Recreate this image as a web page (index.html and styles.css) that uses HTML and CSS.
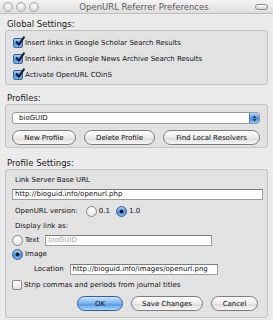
FILE: index.html
```html
<!DOCTYPE html>
<html lang="en">
<head>
  <meta charset="UTF-8" />
  <title>OpenURL Referrer Preferences</title>
  <link rel="stylesheet" href="styles.css">
</head>
<body>
  <div class="window">
    <div class="titlebar">
      <div class="lights">
        <span class="light"></span><span class="light"></span><span class="light"></span>
      </div>
      <div class="title">OpenURL Referrer Preferences</div>
      <span class="pill"></span>
    </div>

    <div class="label">Global Settings:</div>
    <div class="group global">
      <div class="row"><span class="check on"><svg viewBox="0 0 10 10"><path d="M2 5 L4.3 7.8 L9.5 0.5" /></svg></span>Insert links in Google Scholar Search Results</div>
      <div class="row"><span class="check on"><svg viewBox="0 0 10 10"><path d="M2 5 L4.3 7.8 L9.5 0.5" /></svg></span>Insert links in Google News Archive Search Results</div>
      <div class="row"><span class="check on"><svg viewBox="0 0 10 10"><path d="M2 5 L4.3 7.8 L9.5 0.5" /></svg></span>Activate OpenURL COinS</div>
    </div>

    <div class="label">Profiles:</div>
    <div class="group profiles">
      <div class="select">
        <span class="select-text">bioGUID</span>
        <span class="select-cap"><svg viewBox="0 0 6 10"><path d="M1 4 L3 1.5 L5 4 Z M1 6 L3 8.5 L5 6 Z" /></svg></span>
      </div>
      <div class="btn-row">
        <span class="btn w-new">New Profile</span>
        <span class="btn w-del">Delete Profile</span>
        <span class="btn w-find">Find Local Resolvers</span>
      </div>
    </div>

    <div class="label">Profile Settings:</div>
    <div class="group settings">
      <div class="field-label">Link Server Base URL</div>
      <div class="input wide">http://bioguid.info/openurl.php</div>
      <div class="row version">
        <span class="field-label">OpenURL version:</span>
        <span class="radio"></span><span class="opt">0.1</span>
        <span class="radio on"></span><span class="opt">1.0</span>
      </div>
      <div class="field-label">Display link as:</div>
      <div class="row">
        <span class="radio"></span><span class="opt">Text</span>
        <span class="input text-input dim">bioGUID</span>
      </div>
      <div class="row">
        <span class="radio on"></span><span class="opt">Image</span>
      </div>
      <div class="row location">
        <span class="loc-label">Location</span>
        <span class="input loc-input">http://bioguid.info/images/openurl.png</span>
      </div>
      <div class="row strip"><span class="check"></span>Strip commas and periods from journal titles</div>
      <div class="btn-row actions">
        <span class="btn default w-ok">OK</span>
        <span class="btn w-save">Save Changes</span>
        <span class="btn w-cancel">Cancel</span>
      </div>
    </div>
  </div>
</body>
</html>
```

FILE: styles.css
```css
* { margin: 0; padding: 0; box-sizing: border-box; }

html, body {
  width: 273px;
  height: 320px;
  overflow: hidden;
}

body {
  font-family: "DejaVu Sans", sans-serif;
  font-size: 7px;
  color: #111;
  background: #ececec;
  background-image: repeating-linear-gradient(180deg, #eeeeee 0, #eeeeee 1px, #e8e8e8 1px, #e8e8e8 2px);
}

.window { height: 320px; }

.titlebar {
  height: 14px;
  display: flex;
  align-items: center;
  padding: 0 5px 0 3px;
  background: linear-gradient(#f4f4f4, #dedede);
  border-bottom: 1px solid #bcbcbc;
}
.lights { display: flex; gap: 3px; }
.light {
  width: 10px;
  height: 10px;
  border-radius: 50%;
  border: 1px solid #a9a9a9;
  background: radial-gradient(circle at 50% 35%, #fafafa, #cfcfcf);
}
.title {
  flex: 1;
  text-align: center;
  font-size: 8.5px;
  color: #5a5a5a;
  padding-right: 6px;
}
.pill {
  width: 13px;
  height: 6px;
  border-radius: 3px;
  border: 1px solid #8c8c8c;
  background: linear-gradient(#fdfdfd, #d4d4d4);
}

.label {
  font-size: 8.5px;
  padding: 0 0 0 7px;
  line-height: 10px;
  color: #202020;
}
.titlebar + .label { margin-top: 5px; }

.group {
  margin: 1px 5px 0 5px;
  border: 1px solid #c2c2c2;
  border-radius: 3px;
  background: rgba(210, 210, 210, 0.35);
}

.global { padding: 4px 0 3px 7px; height: 55px; margin-bottom: 8px; }
.global .row { height: 16px; }

.row {
  display: flex;
  align-items: center;
  white-space: nowrap;
}

.check {
  width: 10px;
  height: 10px;
  margin-right: 2px;
  border: 1px solid #8a8a8a;
  border-radius: 2px;
  background: linear-gradient(#ffffff, #e2e2e2);
  flex: none;
  position: relative;
}
.check.on {
  border-color: #3a5f9a;
  background: linear-gradient(#a9cdf3, #4f8fdc 55%, #7fb6ee);
}
.check svg {
  position: absolute;
  left: 0;
  top: -3px;
  width: 11px;
  height: 11px;
}
.check path { fill: none; stroke: #0d1a30; stroke-width: 1.8; }

.profiles { height: 44px; padding: 7px 7px 0 6px; margin-bottom: 10px; }

.select {
  height: 12px;
  display: flex;
  border: 1px solid #9b9b9b;
  border-radius: 3px;
  background: #fff;
  overflow: hidden;
}
.select-text { flex: 1; padding-left: 6px; line-height: 10px; }
.select-cap {
  width: 10px;
  background: linear-gradient(#b4d6f7, #4c8ed9 55%, #8cc0f1);
  border-left: 1px solid #5b82b8;
  display: flex;
  align-items: center;
  justify-content: center;
}
.select-cap svg { width: 5px; height: 9px; }
.select-cap path { fill: #122038; }

.btn-row { display: flex; gap: 8px; margin-top: 6px; }
.btn {
  height: 15px;
  border: 1px solid #7d7d7d;
  border-radius: 8px;
  background: linear-gradient(#ffffff, #ececec 50%, #dadada 51%, #f6f6f6);
  display: flex;
  align-items: center;
  justify-content: center;
  white-space: nowrap;
}
.w-new { width: 64px; }
.w-del { width: 71px; }
.w-find { width: 97px; }

.settings { height: 149px; padding: 5px 0 0 6px; }

.field-label { line-height: 10px; padding-left: 3px; }
.input {
  background: #fff;
  border: 1px solid #9d9d9d;
  border-top-color: #7a7a7a;
  height: 11px;
  line-height: 9px;
  padding-left: 2px;
  white-space: nowrap;
  overflow: hidden;
}
.wide { width: 251px; margin: 4px 0 4px 0; }

.version { height: 12px; margin-bottom: 3px; }
.version .field-label { margin-right: 8px; }
.radio {
  width: 11px;
  height: 11px;
  border-radius: 50%;
  border: 1px solid #8a8a8a;
  background: radial-gradient(circle at 50% 30%, #ffffff, #dcdcdc);
  flex: none;
}
.radio.on {
  border-color: #3a5f9a;
  background: radial-gradient(circle, #0e1a2e 0, #0e1a2e 1.8px, transparent 2.2px),
    linear-gradient(#a9cdf3, #4f8fdc 55%, #7fb6ee);
}
.opt { margin: 0 6px 0 2px; }

.settings > .field-label { margin-bottom: 2px; }
.settings > .row { height: 14px; }
.text-input { width: 167px; margin-left: 0; }
.dim { color: #a5a5a5; }

.settings > .location { height: 14px; margin-top: 1px; }
.loc-label { margin: 0 6px 0 22px; }
.loc-input { width: 148px; }

.settings > .strip { height: 14px; margin-top: 2px; }

.actions { margin: 4px 0 0 65px; gap: 8px; }
.w-ok { width: 46px; }
.w-save { width: 72px; }
.w-cancel { width: 47px; }
.btn.default {
  border-color: #35609e;
  background: linear-gradient(#cfe6fb, #76b1ee 50%, #4f95e4 51%, #a9d5fb);
}
```
